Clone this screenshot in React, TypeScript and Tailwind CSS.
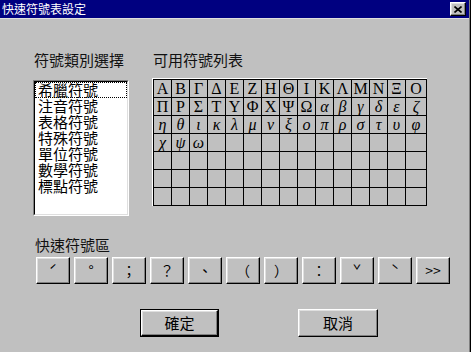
import React from 'react'

const upper = ['Α', 'Β', 'Γ', 'Δ', 'Ε', 'Ζ', 'Η', 'Θ', 'Ι', 'Κ', 'Λ', 'Μ', 'Ν', 'Ξ', 'Ο']
const upper2 = ['Π', 'Ρ', 'Σ', 'Τ', 'Υ', 'Φ', 'Χ', 'Ψ', 'Ω']
const lower = ['α', 'β', 'γ', 'δ', 'ε', 'ζ', 'η', 'θ', 'ι', 'κ', 'λ', 'μ', 'ν', 'ξ', 'ο', 'π', 'ρ', 'σ', 'τ', 'υ', 'φ', 'χ', 'ψ', 'ω']

const categories = ['希臘符號', '注音符號', '表格符號', '特殊符號', '單位符號', '數學符號', '標點符號']
const quick = ['ˊ', '°', '；', '？', '、', '（', '）', '：', 'ˇ', 'ˋ', '>>']

type Cell = { ch: string; italic: boolean }

function buildCells(): Cell[] {
  const cells: Cell[] = []
  upper.forEach((ch) => cells.push({ ch, italic: false }))
  upper2.forEach((ch) => cells.push({ ch, italic: false }))
  lower.forEach((ch) => cells.push({ ch, italic: true }))
  while (cells.length < 15 * 7) cells.push({ ch: '', italic: false })
  return cells
}

const raised =
  'border border-t-white border-l-white border-r-black border-b-black shadow-[inset_-1px_-1px_0_#808080,inset_1px_1px_0_#dfdfdf] bg-[#c0c0c0]'

export default function App() {
  const cells = buildCells()

  return (
    <div
      className="w-[471px] h-[352px] bg-[#c0c0c0] flex overflow-hidden text-black"
      style={{ fontFamily: '"Noto Sans CJK TC", "Liberation Sans", sans-serif' }}
    >
      <div className="flex-1 flex flex-col">
        {/* title bar */}
        <div className="h-[18px] bg-[#000080] flex items-center justify-between pl-[2px] pr-[3px]">
          <span className="text-white text-[12px] leading-[18px]">快速符號表設定</span>
          <button className={`w-[16px] h-[14px] flex items-center justify-center ${raised}`}>
            <svg width="8" height="7" viewBox="0 0 8 7">
              <path d="M0.5 0.5 L7.5 6.5 M7.5 0.5 L0.5 6.5" stroke="#000" strokeWidth="1.6" />
            </svg>
          </button>
        </div>
        <div className="h-px bg-[#dfdfdf]" />

        {/* upper section */}
        <div className="flex pt-[33px] pl-[33px]">
          <div className="flex flex-col w-[96px]">
            <div className="text-[15px] leading-[16px] pl-[1px] text-[#111]">符號類別選擇</div>
            <div className="mt-[12px] h-[136px] border border-t-[#808080] border-l-[#808080] border-r-white border-b-white">
              <div className="h-full bg-white border border-t-black border-l-black border-r-[#dfdfdf] border-b-[#dfdfdf]">
                {categories.map((c, i) => (
                  <div
                    key={c}
                    className={`h-[16px] leading-[16px] text-[15px] pl-[3px] whitespace-nowrap ${
                      i === 0 ? 'outline-1 outline-dotted outline-black -outline-offset-1' : ''
                    }`}
                  >
                    {c}
                  </div>
                ))}
              </div>
            </div>
          </div>

          <div className="flex flex-col ml-[23px]">
            <div className="text-[15px] leading-[16px] pl-[1px] text-[#111]">可用符號列表</div>
            <div className="mt-[10px] border-t border-l border-white w-[275px]">
              <div className="border-t border-l border-black grid grid-cols-[repeat(14,18px)_21px]">
                {cells.map((cell, i) => (
                  <div
                    key={i}
                    className={`h-[18px] border-r border-b border-black flex items-center justify-center text-[16px] leading-none ${
                      cell.italic ? 'italic' : ''
                    }`}
                    style={{ fontFamily: '"Liberation Serif", "DejaVu Serif", serif' }}
                  >
                    {cell.ch}
                  </div>
                ))}
              </div>
            </div>
          </div>
        </div>

        {/* quick symbols */}
        <div className="pl-[35px] mt-[21px] text-[15px] leading-[16px] text-[#111]">快速符號區</div>
        <div className="flex gap-[4px] pl-[36px] mt-[4px]">
          {quick.map((q) => (
            <button
              key={q}
              className={`w-[34px] h-[27px] flex items-center justify-center text-[14px] ${raised}`}
            >
              {q}
            </button>
          ))}
        </div>

        {/* ok / cancel */}
        <div className="flex pl-[140px] mt-[25px] gap-[79px]">
          <div className="border border-black">
            <button className={`w-[77px] h-[26px] flex items-center justify-center text-[15px] ${raised}`}>
              確定
            </button>
          </div>
          <button className={`w-[80px] h-[28px] flex items-center justify-center text-[15px] ${raised}`}>
            取消
          </button>
        </div>
      </div>
      <div className="w-px bg-[#808080]" />
      <div className="w-px bg-black" />
    </div>
  )
}
